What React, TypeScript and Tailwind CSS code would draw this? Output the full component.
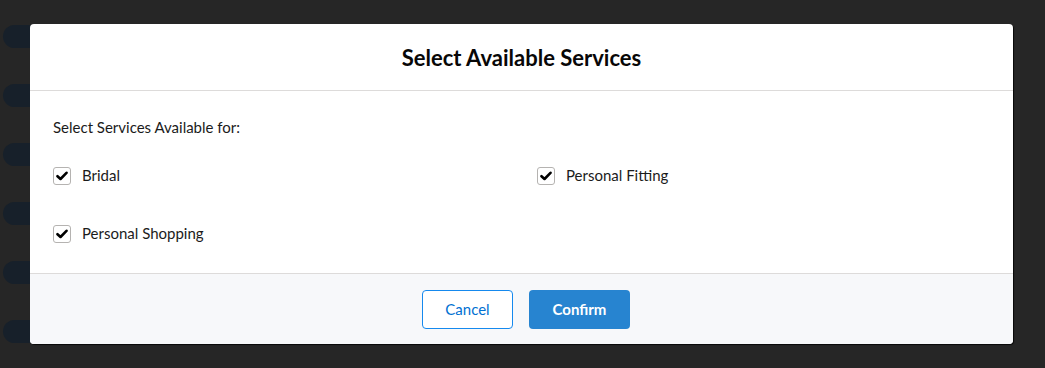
import React from "react";

function Check({ label }: { label: string }) {
  return (
    <div className="flex h-[22px] items-center">
      <span className="flex h-[18px] w-[18px] items-center justify-center rounded-[3px] border border-[#b5b3b1] bg-white">
        <svg width="12" height="10" viewBox="0 0 12 10">
          <path d="M1.5 5.2 L4.5 8 L10.5 1.8" fill="none" stroke="#000" strokeWidth="2.6" strokeLinecap="round" strokeLinejoin="round" />
        </svg>
      </span>
      <span className="ml-[11px] text-[15px] text-[#1b1b1b]">{label}</span>
    </div>
  );
}

export default function App() {
  return (
    <div className="relative h-[368px] w-[1045px] overflow-hidden bg-[#262626]" style={{ fontFamily: "Lato, 'Open Sans', sans-serif" }}>
      <div className="absolute left-[3px] top-[25px] flex flex-col gap-[36px]">
        {[0, 1, 2, 3, 4, 5].map((i) => (
          <div key={i} className="h-[23px] w-[40px] rounded-full bg-[#17202a]" />
        ))}
      </div>
      <div className="absolute left-[30px] top-[24px] flex h-[320px] w-[983px] flex-col overflow-hidden rounded-[4px] bg-white shadow-[1px_1px_1px_rgba(0,0,0,0.8)]">
        <div className="flex h-[67px] items-center justify-center border-b border-[#dddbda]">
          <h2 className="text-[22px] font-bold text-[#080707]">Select Available Services</h2>
        </div>
        <div className="flex-1 px-[23px] pt-[25px]">
          <div className="text-[15px] text-[#1b1b1b]">Select Services Available for:</div>
          <div className="mt-[26px] grid grid-cols-[484px_1fr] gap-y-[36px]">
            <Check label="Bridal" />
            <Check label="Personal Fitting" />
            <Check label="Personal Shopping" />
          </div>
        </div>
        <div className="flex h-[71px] items-center justify-center gap-[16px] border-t border-[#dddbda] bg-[#f7f8fa] pl-[9px]">
          <button className="h-[39px] w-[91px] rounded-[4px] border border-[#1589ee] bg-white text-[15px] text-[#0070d2]">Cancel</button>
          <button className="h-[39px] w-[101px] rounded-[4px] bg-[#2784d0] text-[15px] font-bold text-white">Confirm</button>
        </div>
      </div>
    </div>
  );
}
